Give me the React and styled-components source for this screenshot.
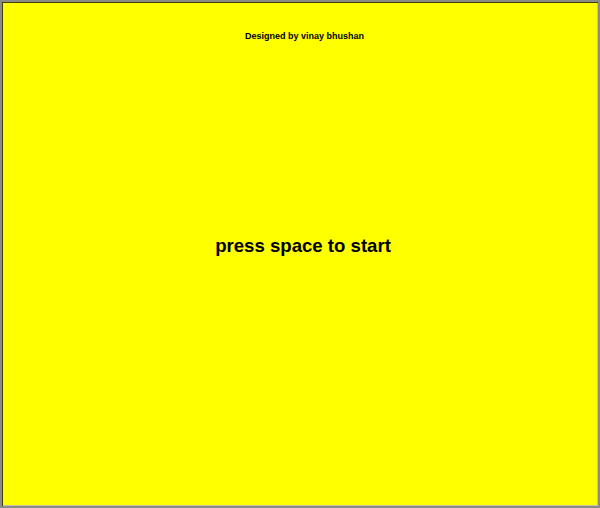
import React from "react";
import styled, { createGlobalStyle } from "styled-components";

const Global = createGlobalStyle`
  html, body { margin: 0; padding: 0; background: #ffff00; }
  #root { width: 600px; height: 508px; }
`;

const Frame = styled.div`
  box-sizing: border-box;
  width: 600px;
  height: 508px;
  border: 2px solid #8a8a8a;
  background: #ffff00;
  box-shadow: inset 1px 1px 0 #404000, inset -1px -1px 0 #c4c4a0;
  display: flex;
  flex-direction: column;
  align-items: center;
  font-family: "Liberation Sans", Arial, sans-serif;
  color: #000;
  padding-left: 6px;
`;

const Credit = styled.div`
  margin-top: 29px;
  margin-left: 3px;
  font-size: 9px;
  font-weight: bold;
`;

const Prompt = styled.div`
  margin-top: 194px;
  font-size: 18.6px;
  font-weight: bold;
`;

export default function App() {
  return (
    <>
      <Global />
      <Frame>
        <Credit>Designed by vinay bhushan</Credit>
        <Prompt>press space to start</Prompt>
      </Frame>
    </>
  );
}
